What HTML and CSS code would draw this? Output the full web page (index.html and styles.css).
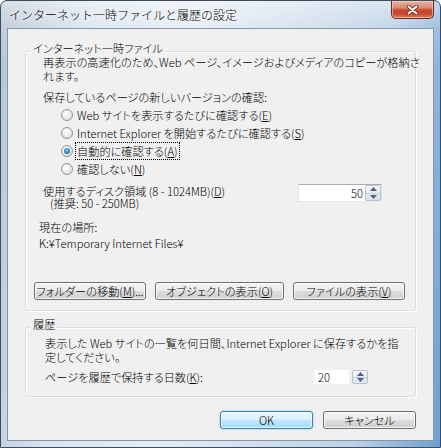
FILE: index.html
```html
<!DOCTYPE html>
<html lang="ja">
<head>
<meta charset="utf-8">
<title>インターネット一時ファイルと履歴の設定</title>
<link rel="stylesheet" href="styles.css">
</head>
<body>
<div class="window">
  <div class="titlebar">
    <span class="title">インターネット一時ファイルと履歴の設定</span>
    <div class="close">
      <svg width="13" height="10" viewBox="0 0 13 10">
        <path d="M2.5 1.5 L10.5 8.5 M10.5 1.5 L2.5 8.5" stroke="#5a2418" stroke-width="3.6" stroke-linecap="round" fill="none"/>
        <path d="M2.5 1.5 L10.5 8.5 M10.5 1.5 L2.5 8.5" stroke="#ffffff" stroke-width="2" stroke-linecap="round" fill="none"/>
      </svg>
    </div>
  </div>
  <div class="client">
    <section class="group g1">
      <span class="legend">インターネット一時ファイル</span>
      <p class="desc">再表示の高速化のため、Web ページ、イメージおよびメディアのコピーが格納さ<br>れます。</p>
      <p class="check-label">保存しているページの新しいバージョンの確認:</p>
      <ul class="radios">
        <li><span class="radio"></span><span class="rtext">Web サイトを表示するたびに確認する(<u>E</u>)</span></li>
        <li><span class="radio"></span><span class="rtext">Internet Explorer を開始するたびに確認する(<u>S</u>)</span></li>
        <li><span class="radio checked"></span><span class="rtext focus">自動的に確認する(<u>A</u>)</span></li>
        <li><span class="radio"></span><span class="rtext">確認しない(<u>N</u>)</span></li>
      </ul>
      <div class="disk-row">
        <div class="disk-label">使用するディスク領域 (8 - 1024MB)(<u>D</u>)<br><span class="rec">(推奨: 50 - 250MB)</span></div>
        <div class="spin spin1">
          <span class="spin-field right">50</span>
          <span class="spin-btns">
            <span class="sb up"><svg width="7" height="4" viewBox="0 0 7 4"><path d="M3.5 0 L7 4 L0 4 Z" fill="#4d6185"/></svg></span>
            <span class="sb down"><svg width="7" height="4" viewBox="0 0 7 4"><path d="M0 0 L7 0 L3.5 4 Z" fill="#4d6185"/></svg></span>
          </span>
        </div>
      </div>
      <p class="loc-label">現在の場所:</p>
      <p class="loc-path">K:¥Temporary Internet Files¥</p>
      <div class="btn-row">
        <span class="btn b1">フォルダーの移動(<u>M</u>)...</span>
        <span class="btn b2">オブジェクトの表示(<u>O</u>)</span>
        <span class="btn b3">ファイルの表示(<u>V</u>)</span>
      </div>
    </section>
    <section class="group g2">
      <span class="legend">履歴</span>
      <p class="desc">表示した Web サイトの一覧を何日間、Internet Explorer に保存するかを指<br>定してください。</p>
      <div class="days-row">
        <span class="days-label">ページを履歴で保持する日数(<u>K</u>):</span>
        <div class="spin spin2">
          <span class="spin-field">20</span>
          <span class="spin-btns">
            <span class="sb up"><svg width="7" height="4" viewBox="0 0 7 4"><path d="M3.5 0 L7 4 L0 4 Z" fill="#4d6185"/></svg></span>
            <span class="sb down"><svg width="7" height="4" viewBox="0 0 7 4"><path d="M0 0 L7 0 L3.5 4 Z" fill="#4d6185"/></svg></span>
          </span>
        </div>
      </div>
    </section>
    <div class="footer">
      <span class="btn default">OK</span>
      <span class="btn">キャンセル</span>
    </div>
  </div>
</div>
</body>
</html>
```

FILE: styles.css
```css
* { box-sizing: border-box; }
html, body { margin: 0; padding: 0; }
body {
  width: 441px;
  height: 448px;
  overflow: hidden;
  background: #ffffff;
  font-family: "Noto Sans CJK JP", sans-serif;
  font-size: 12px;
  font-weight: 300;
  color: #000;
}
p { margin: 0; }
u { text-decoration: underline; text-underline-offset: 1px; }

.window {
  width: 441px;
  height: 448px;
  border: 1px solid #3d4c5c;
  border-radius: 7px 7px 0 0;
  padding: 0 6px 6px 6px;
  display: flex;
  flex-direction: column;
  background:
    linear-gradient(180deg, rgba(255,255,255,0.45) 0px, rgba(255,255,255,0.15) 27px, rgba(255,255,255,0) 60px),
    linear-gradient(95deg, #b7c6d4 0%, #d9e4ee 18%, #e4ecf4 40%, #d2dfec 62%, #bcd1e6 82%, #6f9fd3 100%);
}

.titlebar {
  height: 27px;
  display: flex;
  align-items: flex-start;
  flex: none;
}
.title {
  line-height: 27px;
  padding-left: 2px;
  font-size: 12px;
  color: #000;
  white-space: nowrap;
  text-shadow: 0 0 4px #fff, 0 0 8px #fff;
}
.close {
  margin-left: auto;
  width: 43px;
  height: 18px;
  border: 1px solid #6d2a1e;
  border-top: none;
  border-radius: 0 0 5px 5px;
  background: linear-gradient(180deg, #e9b3a3 0%, #dc8a73 40%, #c94b2d 52%, #c9472a 75%, #e07a55 100%);
  box-shadow: inset 0 0 0 1px rgba(255,220,205,0.55);
  display: flex;
  align-items: center;
  justify-content: center;
}

.client {
  flex: 1;
  border: 1px solid #8497aa;
  background: #f0f0f0;
  padding: 22px 17px 0 17px;
  font-size: 11.2px;
  font-feature-settings: "palt";
}

.group {
  position: relative;
  border: 1px solid #d5dfe5;
  border-radius: 3px;
  box-shadow: inset 1px 1px 0 #fff, 1px 1px 0 #fff;
}
.legend {
  position: absolute;
  top: -11px;
  left: 5px;
  padding: 0 2px;
  line-height: 14px;
  background: #f0f0f0;
  white-space: nowrap;
}
.g1 { padding: 3px 0 10px 17px; }
.g2 { margin-top: 16px; padding: 8px 0 11px 19px; }

.desc { line-height: 14px; white-space: nowrap; }
.check-label { margin-top: 7px; line-height: 14px; }

.radios { list-style: none; margin: 2px 0 0 0; padding: 0; }
.radios li {
  height: 18px;
  display: flex;
  align-items: center;
  padding-left: 18px;
  white-space: nowrap;
}
.radio {
  position: relative;
  width: 12px;
  height: 12px;
  border-radius: 50%;
  border: 1px solid #949494;
  background: radial-gradient(circle at 40% 35%, #ffffff 0%, #ececec 45%, #d4d4d4 100%);
  margin-right: 4px;
  flex: none;
}
.radio.checked::after {
  content: "";
  position: absolute;
  left: 2px;
  top: 2px;
  width: 6px;
  height: 6px;
  border-radius: 50%;
  background: radial-gradient(circle at 45% 40%, #8fd0f5 0%, #2a7fb8 55%, #154a74 100%);
}
.rtext { line-height: 14px; padding: 1px 1px; margin-left: -1px; }
.rtext.focus { outline: 1px dotted #000; outline-offset: 0; }

.disk-row {
  margin-top: 6px;
  display: flex;
  align-items: flex-start;
}
.disk-label {
  flex: 1;
  padding-top: 1px;
  line-height: 12px;
  white-space: nowrap;
}
.rec { padding-left: 7px; }

.spin {
  display: flex;
  background: #fff;
  border: 1px solid #abadb3;
  border-top-color: #abadb3;
  border-left-color: #e2e3ea;
  border-right-color: #dbdfe6;
  border-bottom-color: #e3e9ef;
}
.spin1 { width: 84px; height: 18px; margin-right: 33px; }
.spin2 { width: 56px; height: 16px; margin-right: 46px; border-color: #f0f0f0; background: #f0f0f0; }
.spin-field {
  flex: 1;
  line-height: 16px;
  padding: 0 3px;
  background: #fff;
}
.spin2 .spin-field { line-height: 14px; padding-left: 4px; margin-right: 3px; }
.spin-field.right { text-align: right; padding-right: 2px; }
.spin-btns {
  width: 16px;
  display: flex;
  flex-direction: column;
  border: 1px solid #b8c3cf;
  border-radius: 2px;
  background: linear-gradient(180deg, #f6f8fa 0%, #e6eaee 50%, #dde2e7 100%);
}
.sb {
  flex: 1;
  display: flex;
  align-items: center;
  justify-content: center;
}
.sb.up { border-bottom: 1px solid #c8d0d9; }

.loc-label { margin-top: 11px; margin-left: -4px; line-height: 14px; }
.loc-path { margin-top: 2px; margin-left: -4px; line-height: 14px; white-space: nowrap; }

.btn-row {
  margin-top: 32px;
  margin-left: -9px;
  display: flex;
  gap: 9px;
}

.btn {
  height: 18px;
  display: flex;
  align-items: center;
  justify-content: center;
  border: 1px solid #707070;
  border-radius: 3px;
  background: linear-gradient(180deg, #f4f4f4 0%, #ebebeb 48%, #dcdcdc 52%, #d0d0d0 100%);
  box-shadow: inset 0 0 0 1px rgba(255,255,255,0.8);
  line-height: 14px;
  white-space: nowrap;
}
.b1 { width: 112px; }
.b2 { width: 129px; }
.b3 { width: 112px; }

.days-row {
  margin-top: 5px;
  height: 16px;
  display: flex;
  align-items: center;
}
.days-label { flex: 1; line-height: 14px; white-space: nowrap; }

.footer {
  margin-top: 14px;
  display: flex;
  justify-content: flex-end;
  gap: 10px;
  padding-right: 0;
}
.footer .btn { width: 93px; }
.footer .btn.default {
  border-color: #3c7fb1;
  background: linear-gradient(180deg, #eaf6fd 0%, #d9f0fc 48%, #bee6fd 52%, #a7d9f5 100%);
  box-shadow: inset 0 0 0 1px rgba(255,255,255,0.7), 0 0 2px #6ec5f0;
}
```
